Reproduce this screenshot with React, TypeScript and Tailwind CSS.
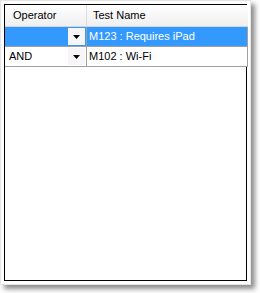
import React from "react";

const ROWS = [
  { op: "", test: "M123 : Requires iPad", selected: true },
  { op: "AND", test: "M102 : Wi-Fi", selected: false },
];

function DropArrow() {
  return (
    <div className="flex h-[17px] w-[17px] items-center justify-center bg-[#f7f5f7]">
      <svg width="7" height="4" viewBox="0 0 7 4">
        <path d="M0 0h7L3.5 4z" fill="#000" />
      </svg>
    </div>
  );
}

export default function App() {
  return (
    <div className="h-[293px] w-[260px] bg-white" style={{ fontFamily: '"Liberation Sans", Arial, sans-serif' }}>
      <div className="h-[285px] w-[251px] border border-[#e4e4e4] bg-white p-[3px] shadow-[4px_4px_5px_rgba(0,0,0,0.45)]">
        <div className="flex h-full w-full flex-col border border-black bg-white">
          {/* header */}
          <div className="flex h-[22px] w-[243px] border-b border-[#d5d5d5] bg-gradient-to-b from-white to-[#efefef] text-[11px] text-black">
            <div className="flex w-[82px] items-center border-r border-[#dcdcdc] pl-[8px]">Operator</div>
            <div className="flex flex-1 items-center pl-[6px]">Test Name</div>
          </div>

          {/* rows */}
          {ROWS.map((r, i) => (
            <div
              key={i}
              className={`flex h-[20px] w-[243px] border-b border-[#a0a0a0] text-[11px] ${
                r.selected ? "bg-[#3399ff] text-white" : "bg-white text-black"
              }`}
            >
              <div className="flex w-[82px] items-center justify-between border-r border-[#a0a0a0] pl-[4px] pr-[1px]">
                <span>{r.op}</span>
                <DropArrow />
              </div>
              <div className="flex flex-1 items-center border-r border-[#a0a0a0] pl-[2px]">{r.test}</div>
            </div>
          ))}
        </div>
      </div>
    </div>
  );
}
